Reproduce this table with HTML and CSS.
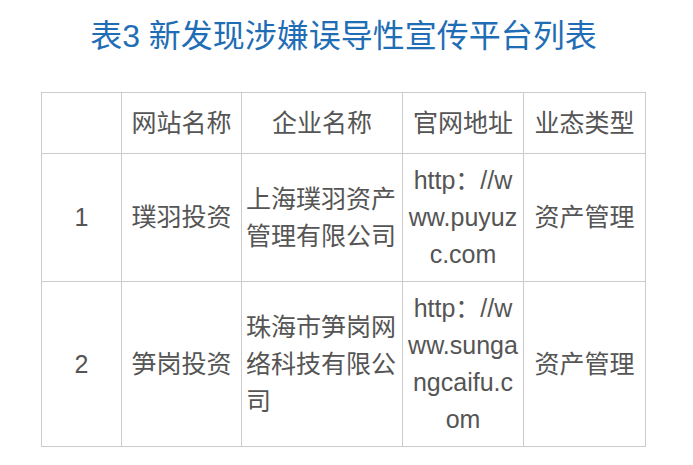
FILE: index.html
```html
<!DOCTYPE html>
<html lang="zh-CN">
<head>
<meta charset="utf-8">
<title>表3 新发现涉嫌误导性宣传平台列表</title>
<link rel="stylesheet" href="styles.css">
</head>
<body>
<div class="page">
  <h1 class="title">表3 新发现涉嫌误导性宣传平台列表</h1>
  <table class="list">
    <colgroup>
      <col class="c1"><col class="c2"><col class="c3"><col class="c4"><col class="c5">
    </colgroup>
    <thead>
      <tr class="head">
        <th></th>
        <th>网站名称</th>
        <th>企业名称</th>
        <th>官网地址</th>
        <th>业态类型</th>
      </tr>
    </thead>
    <tbody>
      <tr>
        <td>1</td>
        <td>璞羽投资</td>
        <td class="left">上海璞羽资产管理有限公司</td>
        <td class="url">http：//www.puyuzc.com</td>
        <td>资产管理</td>
      </tr>
      <tr>
        <td>2</td>
        <td>笋岗投资</td>
        <td class="left">珠海市笋岗网络科技有限公司</td>
        <td class="url">http：//www.sungangcaifu.com</td>
        <td>资产管理</td>
      </tr>
    </tbody>
  </table>
</div>
</body>
</html>
```
FILE: styles.css
```css
html, body {
  margin: 0;
  padding: 0;
  background: #ffffff;
}
.page {
  padding: 14px 0 0 41px;
  font-family: "Liberation Sans", "Noto Sans CJK SC", sans-serif;
}
.title {
  margin: 0 0 34px 0;
  width: 605px;
  text-align: center;
  font-size: 32px;
  line-height: 44px;
  font-weight: normal;
  color: #1f6db5;
}
.list {
  border-collapse: collapse;
  table-layout: fixed;
  width: 605px;
  font-size: 25px;
  line-height: 37px;
  color: #555555;
}
.c1 { width: 80px; }
.c2 { width: 120px; }
.c3 { width: 161px; }
.c4 { width: 121px; }
.c5 { width: 122px; }
.list th,
.list td {
  border: 1px solid #cccccc;
  padding: 8px 4px;
  text-align: center;
  vertical-align: middle;
  font-weight: normal;
}
.head th {
  height: 60px;
  padding: 0 4px;
}
.list td.left {
  text-align: left;
}
.list td.url {
  word-break: break-all;
}
```
